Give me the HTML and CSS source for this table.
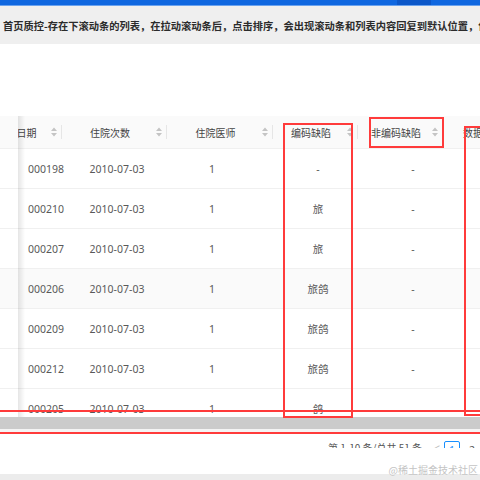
FILE: index.html
```html
<!DOCTYPE html>
<html lang="zh">
<head>
<meta charset="utf-8">
<link rel="stylesheet" href="styles.css">
</head>
<body>
<div class="topbar"><span class="topbar-active"></span></div>
<div class="notice">首页质控-存在下滚动条的列表，在拉动滚动条后，点击排序，会出现滚动条和列表内容回复到默认位置，但是</div>
<div class="gap"></div>
<div class="table">
  <div class="thead">
    <div class="th"><span class="title">日期</span><svg class="sorter" viewBox="0 0 6 10"><path d="M0 4L3 0.5 6 4Z M0 6L3 9.5 6 6Z"/></svg></div>
    <div class="th"><span class="title">住院次数</span><svg class="sorter" viewBox="0 0 6 10"><path d="M0 4L3 0.5 6 4Z M0 6L3 9.5 6 6Z"/></svg></div>
    <div class="th"><span class="title">住院医师</span><svg class="sorter" viewBox="0 0 6 10"><path d="M0 4L3 0.5 6 4Z M0 6L3 9.5 6 6Z"/></svg></div>
    <div class="th"><span class="title">编码缺陷</span><svg class="sorter" viewBox="0 0 6 10"><path d="M0 4L3 0.5 6 4Z M0 6L3 9.5 6 6Z"/></svg></div>
    <div class="th"><span class="title">非编码缺陷</span><svg class="sorter" viewBox="0 0 6 10"><path d="M0 4L3 0.5 6 4Z M0 6L3 9.5 6 6Z"/></svg></div>
    <div class="th th-left"><span class="title">数据来源</span></div>
  </div>
  <div class="tbody">
    <div class="tr"><div class="td"></div><div class="td">000198</div><div class="td">2010-07-03</div><div class="td">1</div><div class="td">-</div><div class="td">-</div><div class="td"></div></div>
    <div class="tr"><div class="td"></div><div class="td">000210</div><div class="td">2010-07-03</div><div class="td">1</div><div class="td">旅</div><div class="td">-</div><div class="td"></div></div>
    <div class="tr"><div class="td"></div><div class="td">000207</div><div class="td">2010-07-03</div><div class="td">1</div><div class="td">旅</div><div class="td">-</div><div class="td"></div></div>
    <div class="tr hover"><div class="td"></div><div class="td">000206</div><div class="td">2010-07-03</div><div class="td">1</div><div class="td">旅鸽</div><div class="td">-</div><div class="td"></div></div>
    <div class="tr"><div class="td"></div><div class="td">000209</div><div class="td">2010-07-03</div><div class="td">1</div><div class="td">旅鸽</div><div class="td">-</div><div class="td"></div></div>
    <div class="tr"><div class="td"></div><div class="td">000212</div><div class="td">2010-07-03</div><div class="td">1</div><div class="td">旅鸽</div><div class="td">-</div><div class="td"></div></div>
    <div class="tr"><div class="td"></div><div class="td">000205</div><div class="td">2010-07-03</div><div class="td">1</div><div class="td">鸽</div><div class="td">-</div><div class="td"></div></div>
  </div>
  <div class="hscroll"></div>
  <div class="hscroll-gap"></div>
  <div class="fix-head"></div>
  <div class="fix-shadow"></div>
</div>
<div class="pager-wrap">
  <div class="pager">
    <span class="total">第 1-10 条/总共 51 条</span>
    <span class="prev">&lt;</span>
    <span class="page active">1</span>
    <span class="page">2</span>
  </div>
</div>
<div class="foot"></div>

<div class="anno anno-code"></div>
<div class="anno anno-noncode"></div>
<div class="anno anno-data"></div>
<div class="anno-line l1"></div>
<div class="anno-line l2"></div>
<div class="watermark">@稀土掘金技术社区</div>
</body>
</html>
```
FILE: styles.css
```css
* { box-sizing: border-box; margin: 0; padding: 0; }
html, body { width: 480px; height: 480px; overflow: hidden; background: #fff; }
body {
  position: relative;
  font-family: "Noto Sans", "Noto Sans CJK SC", sans-serif;
  font-size: 10.5px;
  color: #595959;
}
.topbar {
  height: 6px;
  background: #0f67e0;
  border-bottom: 1px solid #6aa2ee;
  padding-left: 397px;
}
.topbar-active { display: block; width: 34px; height: 5px; background: #0b57c9; }
.notice {
  height: 38px;
  background: #efefef;
  display: flex;
  align-items: center;
  padding-left: 3px;
  white-space: nowrap;
  overflow: hidden;
  font-family: "Noto Sans CJK SC", sans-serif;
  font-weight: 600;
  font-size: 10.25px;
  color: #2b2b2b;
}
.gap { height: 72px; }
.table { position: relative; overflow: hidden; }
.thead {
  display: grid;
  grid-template-columns: 62px 105px 106px 85px 85px 100px;
  height: 33px;
  background: #fafafa;
  border-bottom: 1px solid #f0f0f0;
}
.th { position: relative; display: flex; align-items: center; padding: 0 5px 0 6px; }
.th::after {
  content: "";
  position: absolute;
  right: 0;
  top: 9px;
  width: 1px;
  height: 14px;
  background: #e6e6e6;
}
.th-left .title { text-align: left; padding-left: 14px; }
.title {
  flex: 1;
  text-align: center;
  color: #444;
  white-space: nowrap;
  font-family: "Noto Sans CJK SC", sans-serif;
  font-size: 10px;
}
.sorter { width: 6px; height: 10px; margin-left: 4px; flex: none; fill: #c4c4c4; }
.tbody { height: 268px; overflow: hidden; }
.tr {
  display: grid;
  grid-template-columns: 18px 56px 86px 104px 108px 82px 100px;
  height: 40px;
  border-bottom: 1px solid #f0f0f0;
}
.tr.hover { background: #fafafa; }
.td {
  display: flex;
  align-items: center;
  justify-content: center;
  white-space: nowrap;
  font-family: "Noto Sans", "Noto Sans CJK SC", sans-serif;
}
.hscroll { height: 12px; background: #cbcbcb; }
.hscroll-gap { height: 3px; background: #f4f4f4; }
.fix-head { position: absolute; left: 0; top: 0; width: 18px; height: 32px; background: #fafafa; }
.fix-shadow {
  position: absolute;
  left: 18px;
  top: 0;
  width: 7px;
  height: 301px;
  background: linear-gradient(to right, rgba(0,0,0,0.1), rgba(0,0,0,0));
}
.pager-wrap { height: 16px; overflow: hidden; }
.pager {
  display: flex;
  align-items: flex-start;
  padding: 7px 0 0 328px;
  white-space: nowrap;
}
.total { font-family: "Noto Sans CJK SC", sans-serif; font-size: 10px; color: #555; line-height: 18px; }
.prev { margin-left: 12px; color: #bbb; line-height: 18px; }
.page {
  width: 18px;
  height: 18px;
  line-height: 16px;
  text-align: center;
  margin: 2px 0 0 4px;
  border: 1px solid transparent;
  color: #555;
}
.page.active { border-color: #1890ff; color: #1890ff; border-radius: 2px; }
.foot { position: absolute; left: 0; bottom: 0; width: 480px; height: 6px; background: #ececec; }
.anno { position: absolute; border: 2px solid #ff3b3b; }
.anno-code { left: 283px; top: 123px; width: 70px; height: 295px; }
.anno-noncode { left: 369px; top: 117px; width: 75px; height: 31px; }
.anno-data { left: 464px; top: 126px; width: 40px; height: 290px; }
.anno-line { position: absolute; left: 0; width: 480px; height: 2px; background: #ff3b3b; }
.l1 { top: 410px; }
.l2 { top: 432px; }
.watermark {
  position: absolute;
  right: 2px;
  bottom: 3px;
  font-family: "Noto Sans CJK SC", sans-serif;
  font-size: 10px;
  color: #c4c4c4;
  text-shadow: 0 0 1px #fff;
}
```
